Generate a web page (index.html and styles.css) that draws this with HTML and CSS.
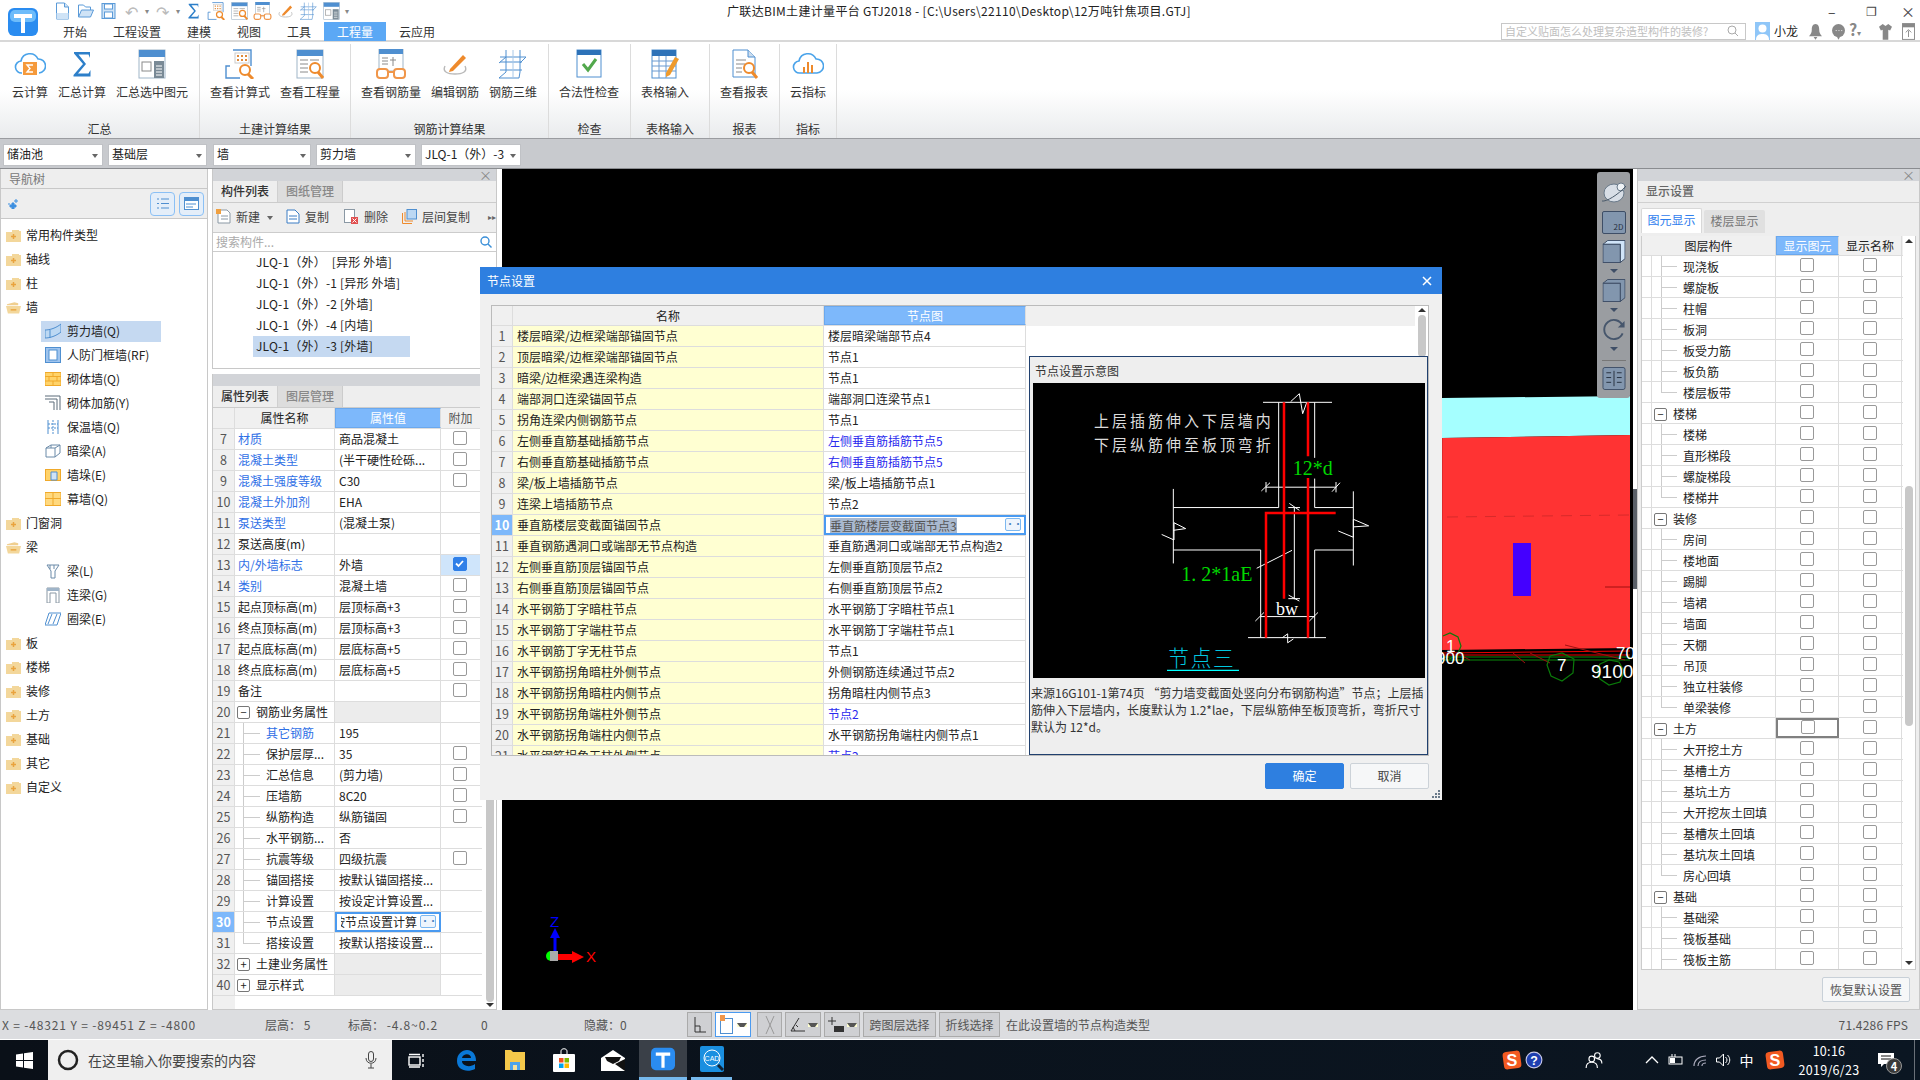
FILE: index.html
```html
<!DOCTYPE html>
<html lang="zh">
<head>
<meta charset="utf-8">
<title>广联达BIM土建计量平台 GTJ2018</title>
<link rel="stylesheet" href="styles.css">
</head>
<body>
<svg class="defs" aria-hidden="true">
  <symbol id="qnew" viewBox="0 0 16 18"><path d="M2 1h8l4 4v12H2z" fill="#fff" stroke="#5a9ad8"/><path d="M10 1v4h4" fill="#cfe3f6" stroke="#5a9ad8"/><path d="M2 11h12v6H2z" fill="#cfe3f6"/></symbol>
  <symbol id="qopen" viewBox="0 0 18 18"><path d="M2 15V3h5l2 2h5v3" fill="#fff" stroke="#5a9ad8"/><path d="M2 15l3-7h12l-3 7z" fill="#cfe3f6" stroke="#5a9ad8"/></symbol>
  <symbol id="qsave" viewBox="0 0 16 18"><rect x="1.500" y="1.500" width="13" height="15" fill="#cfe3f6" stroke="#5a9ad8"/><rect x="4" y="2" width="8" height="5" fill="#fff" stroke="#5a9ad8"/><rect x="4" y="10" width="8" height="6" fill="#fff" stroke="#5a9ad8"/></symbol>
  <symbol id="cloudS" viewBox="0 0 32 30"><path d="M8 24a6 6 0 0 1-1-12 9 9 0 0 1 17-2 7 7 0 0 1 1 14" fill="#fff" stroke="#4aa3ea" stroke-width="1.600"/><rect x="9" y="13" width="14" height="13" fill="#f59a3c"/><path d="M19 16h-6l3 3.500-3 3.500h6" fill="none" stroke="#fff" stroke-width="1.400"/></symbol>
  <symbol id="sigma" viewBox="0 0 32 30"><path d="M8 3h16v6l-1.500-3.500H12.500l7.500 9.500-8 9.500h10.500l2-3.500v6.500H7.500v-1.500l9.500-11L8 4.500z" fill="#2d7fc9"/></symbol>
  <symbol id="sumsel" viewBox="0 0 32 30"><rect x="3" y="1" width="26" height="28" fill="#fff" stroke="#9fb5c8"/><rect x="3" y="1" width="26" height="7" fill="#4f8fd0"/><rect x="6" y="13" width="9" height="9" fill="none" stroke="#8a8a8a"/><rect x="18" y="12" width="10" height="17" fill="#7a8a96"/><path d="M20 17h6M20 20h6M20 23h6M20 26h6" stroke="#fff"/></symbol>
  <symbol id="calcv" viewBox="0 0 32 30"><path d="M9 1h18v16M6 17H2v12h14" fill="none" stroke="#4f8fd0" stroke-width="1.400"/><rect x="11" y="4" width="14" height="10" fill="#fff" stroke="#ccc"/><path d="M13 6h2v2h-2zM17 6h2v2h-2zM21 6h2v2h-2zM13 10h2v2h-2zM17 10h2v2h-2zM21 10h2v2h-2z" fill="#e08a3a"/><circle cx="21" cy="21" r="5" fill="#fff" stroke="#ee8a2c" stroke-width="2"/><path d="M24 25l5 5" stroke="#ee8a2c" stroke-width="3"/></symbol>
  <symbol id="qtyv" viewBox="0 0 32 30"><rect x="3" y="1" width="26" height="28" fill="#fff" stroke="#9fb5c8"/><rect x="3" y="1" width="26" height="6" fill="#4f8fd0"/><path d="M6 11h8M16 11h9M6 15h8M6 19h8M6 23h8" stroke="#8a8a8a"/><circle cx="21" cy="19" r="5" fill="#fff" stroke="#ee8a2c" stroke-width="2"/><path d="M24 23l5 6" stroke="#ee8a2c" stroke-width="3"/></symbol>
  <symbol id="rebarv" viewBox="0 0 32 30"><rect x="4" y="0" width="24" height="22" fill="#fff" stroke="#9fb5c8"/><rect x="4" y="0" width="24" height="5" fill="#4f8fd0"/><path d="M7 9h6M7 12h6M7 15h6M18 8v9M15 11h6" stroke="#8a8a8a"/><rect x="2" y="20" width="11" height="9" rx="3" fill="#fff" stroke="#f0964a" stroke-width="2"/><rect x="19" y="20" width="11" height="9" rx="3" fill="#fff" stroke="#f0964a" stroke-width="2"/><path d="M13 23h6" stroke="#f0964a" stroke-width="2"/></symbol>
  <symbol id="editr" viewBox="0 0 32 30"><path d="M6 17c-3 6 3 8 10 8s13-2 10-8" fill="none" stroke="#b9b9b9" stroke-width="1.400"/><path d="M11 20l13-14 3 3-13 13-4 1z" fill="#ee8a2c"/></symbol>
  <symbol id="r3d" viewBox="0 0 32 30"><path d="M9 1v22M23 1v22M3 8h26M3 13h22M3 21h22M2 29h20M9 23l-7 6M29 8l-6 6M23 23l-1 6M9 8l-7 6" fill="none" stroke="#4f8fd0"/><path d="M16 1v28" stroke="#a8c8e8"/></symbol>
  <symbol id="chk" viewBox="0 0 32 30"><rect x="4" y="1" width="24" height="27" fill="#fff" stroke="#4f8fd0"/><rect x="4" y="1" width="24" height="5" fill="#2d72b8"/><path d="M10 15l5 6 8-11" fill="none" stroke="#52a84c" stroke-width="3"/></symbol>
  <symbol id="tbl" viewBox="0 0 32 30"><rect x="3" y="1" width="24" height="28" fill="#fff" stroke="#4f8fd0"/><rect x="3" y="1" width="24" height="6" fill="#2d72b8"/><path d="M3 12h24M3 17h24M3 22h24M10 7v22M17 7v22" stroke="#6a9ad0"/><path d="M17 24l9-16 4 2-9 16-4 2z" fill="#ee9a2c"/></symbol>
  <symbol id="rept" viewBox="0 0 32 30"><path d="M5 1h15l7 7v20H5z" fill="#fff" stroke="#4f8fd0"/><path d="M20 1v7h7" fill="#cde" stroke="#4f8fd0"/><path d="M8 11h10M8 15h9M8 19h6M8 23h6" stroke="#8a8a8a"/><circle cx="21" cy="19" r="5" fill="#fff" stroke="#ee8a2c" stroke-width="2"/><path d="M24 23l5 6" stroke="#ee8a2c" stroke-width="3"/></symbol>
  <symbol id="cloudC" viewBox="0 0 32 30"><path d="M8 24a6 6 0 0 1-1-12 9 9 0 0 1 17-2 7 7 0 0 1 1 14z" fill="#fff" stroke="#4aa3ea" stroke-width="1.600"/><path d="M12 24v-6M16 24v-11M20 24v-8" stroke="#ee8a2c" stroke-width="2"/></symbol>
  <symbol id="fc" viewBox="0 0 15 13"><path d="M0 3h6V1h7v1h2v11H0z" fill="#f3d79b"/><path d="M7.500 5v5M5 7.500h5" stroke="#e9a33e" stroke-width="1.500"/></symbol>
  <symbol id="fo" viewBox="0 0 16 13"><path d="M1 3l8-2 4 1v2H1z" fill="#f0cf90"/><path d="M0 5h16l-2 8H2z" fill="#f3d79b"/><path d="M5 9h6" stroke="#e9a33e" stroke-width="1.500"/></symbol>
  <symbol id="wShear" viewBox="0 0 16 16"><path d="M0 7c5 0 11-2 16-6v8C11 13 5 15 0 15z" fill="#bcd8f3" stroke="#4f8fd0"/><path d="M5 7v8" stroke="#4f8fd0"/></symbol>
  <symbol id="wDoor" viewBox="0 0 16 16"><rect x="0.500" y="0.500" width="15" height="15" fill="#9fc4ee" stroke="#4f8fd0"/><rect x="4" y="3" width="8" height="10" fill="#fff" stroke="#4f8fd0"/></symbol>
  <symbol id="wBrick" viewBox="0 0 16 13"><rect width="16" height="13" fill="#ffd36a" stroke="#f0a92a"/><path d="M0 4h16M0 8.500h16M8 0v4M4 4v4.500M12 4v4.500M8 8.500v4.500" stroke="#f0a92a"/></symbol>
  <symbol id="wRebar" viewBox="0 0 16 16"><path d="M0 1h15v14M0 4h12v11M4 7h5v8" fill="none" stroke="#5a6a78"/></symbol>
  <symbol id="wInsul" viewBox="0 0 16 16"><path d="M3 1v14M13 1v14" stroke="#4f8fd0"/><path d="M8 1v14M3 5h10M3 9h10" stroke="#4f8fd0" stroke-dasharray="2 1"/></symbol>
  <symbol id="wHide" viewBox="0 0 16 16"><path d="M1 5l5-3h9v8l-5 4H1z" fill="#fff" stroke="#6a8aa8"/><path d="M1 5h9v9M10 5l5-3M6 2v3" fill="none" stroke="#6a8aa8"/></symbol>
  <symbol id="wPier" viewBox="0 0 16 14"><rect x="0.500" y="1.500" width="15" height="11" fill="#ffd36a" stroke="#f0a92a"/><path d="M6 4h6v8H6z" fill="#cfe3f6" stroke="#4f8fd0"/></symbol>
  <symbol id="wCurt" viewBox="0 0 16 13"><rect width="16" height="13" fill="#ffd97f" stroke="#f0a92a"/><path d="M8 0v13M0 6h16" stroke="#f0a92a"/></symbol>
  <symbol id="bFun" viewBox="0 0 16 16"><path d="M2 2h12l-4 6v7H6V8z" fill="#fff" stroke="#6a8aa8"/><path d="M5 2v4M9 2v4" stroke="#6a8aa8"/></symbol>
  <symbol id="bLink" viewBox="0 0 16 16"><path d="M2 1h12v15h-3V6H5v10H2z" fill="#fff" stroke="#8a98a4"/><path d="M2 1h12v3H2z" fill="#9fb4c8"/></symbol>
  <symbol id="bRing" viewBox="0 0 16 14"><path d="M4 1h12l-4 12H0z" fill="#fff" stroke="#4f8fd0"/><path d="M7 2L3 12M12 2L8 12" stroke="#4f8fd0"/></symbol>
  <symbol id="cube" viewBox="0 0 24 24"><path d="M0.500 4.500l5-4h18v19l-5 4V4.500z" fill="#d0e4f8" stroke="#3e4e66"/><rect x="0.500" y="4.500" width="18" height="19" fill="#8296ae" stroke="#3e4e66"/></symbol>
  <symbol id="cube2" viewBox="0 0 24 24"><path d="M0.500 4.500l5-4h18v19l-5 4V4.500z" fill="#8296ae" stroke="#3e4e66"/><rect x="0.500" y="4.500" width="18" height="19" fill="#8296ae" stroke="#3e4e66"/></symbol>
  <symbol id="sog" viewBox="0 0 16 16"><rect x="1" y="1" width="14" height="14" rx="3" fill="#f25a22" transform="rotate(-8 8 8)"/><text x="8" y="13" class="sogt">S</text></symbol>
</svg>

<div class="app">
  <header class="top">
    <div class="logo">
      <svg width="30" height="28" viewBox="0 0 30 28"><rect width="30" height="28" rx="6" fill="#2a8cf0"/><rect x="2" y="2" width="26" height="12" rx="5" fill="#6dbcfa"/><path d="M6 6h18v4h-7v15h-4V10H6z" fill="#fff"/></svg>
    </div>
    <div class="topr">
      <div class="qbar">
        <svg class="q"><use href="#qnew"/></svg><svg class="q"><use href="#qopen"/></svg><svg class="q"><use href="#qsave"/></svg>
        <span class="q qg">↶</span><span class="qa">▾</span><span class="q qg">↷</span><span class="qa">▾</span>
        <svg class="q"><use href="#sigma"/></svg><svg class="q"><use href="#calcv"/></svg><svg class="q"><use href="#qtyv"/></svg><svg class="q"><use href="#rebarv"/></svg><svg class="q"><use href="#editr"/></svg><svg class="q"><use href="#r3d"/></svg><svg class="q"><use href="#sumsel"/></svg>
        <span class="qa">▾</span>
        <span class="ttl">广联达BIM土建计量平台 GTJ2018 - [C:\Users\22110\Desktop\12万吨针焦项目.GTJ]</span>
        <span class="win"><span class="w1">–</span><span class="w2">❐</span><span class="w3">×</span></span>
      </div>
      <div class="tabs">
        <span class="tab">开始</span><span class="tab">工程设置</span><span class="tab">建模</span><span class="tab">视图</span><span class="tab">工具</span><span class="tab on">工程量</span><span class="tab">云应用</span>
        <div class="usr">
          <div class="srch"><span>自定义贴面怎么处理复杂造型构件的装修?</span><svg width="12" height="12" viewBox="0 0 12 12"><circle cx="5" cy="5" r="4" fill="none" stroke="#aaa"/><path d="M8 8l3 3" stroke="#aaa"/></svg></div>
          <svg class="ava" viewBox="0 0 15 18"><rect width="15" height="18" fill="#8fc6f8"/><circle cx="7.500" cy="6.500" r="4" fill="#fff"/><path d="M1 18c0-5 3-6 6.500-6s6.500 1 6.500 6z" fill="#fff"/></svg>
          <span class="uname">小龙</span>
          <svg class="ui" viewBox="0 0 14 18"><path d="M7 1c3 0 4 3 4 6s1 5 3 7H0c2-2 3-4 3-7s1-6 4-6zM5 15h4l-2 3z" fill="#888"/></svg>
          <svg class="ui ui-c" viewBox="0 0 14 18"><circle cx="7" cy="8" r="7" fill="#888"/><path d="M4 8h1M7 8h1M10 8h1" stroke="#fff"/><path d="M5 14h4l-2 4z" fill="#888"/></svg>
          <span class="uq">?<i>▾</i></span>
          <svg class="ui" viewBox="0 0 14 18"><path d="M4 1L0 4l2 4 2-1v11h6V7l2 1 2-4-4-3-3 2z" fill="#888"/></svg>
          <svg class="ui ui-l" viewBox="0 0 14 18"><rect x="0.500" y="0.500" width="13" height="17" fill="#fff" stroke="#888"/><rect x="0.500" y="0.500" width="13" height="4" fill="#888"/><path d="M7 15V8M4 10l3-3 3 3" fill="none" stroke="#888"/></svg>
        </div>
      </div>
    </div>
  </header>

  <section class="ribbon">
    <div class="grp g1"><div class="items">
      <div class="rb"><svg><use href="#cloudS"/></svg><span>云计算</span></div>
      <div class="rb"><svg><use href="#sigma"/></svg><span>汇总计算</span></div>
      <div class="rb"><svg><use href="#sumsel"/></svg><span>汇总选中图元</span></div>
    </div><div class="glab">汇总</div></div>
    <div class="grp g2"><div class="items">
      <div class="rb"><svg><use href="#calcv"/></svg><span>查看计算式</span></div>
      <div class="rb"><svg><use href="#qtyv"/></svg><span>查看工程量</span></div>
    </div><div class="glab">土建计算结果</div></div>
    <div class="grp g3"><div class="items">
      <div class="rb"><svg><use href="#rebarv"/></svg><span>查看钢筋量</span></div>
      <div class="rb"><svg><use href="#editr"/></svg><span>编辑钢筋</span></div>
      <div class="rb"><svg><use href="#r3d"/></svg><span>钢筋三维</span></div>
    </div><div class="glab">钢筋计算结果</div></div>
    <div class="grp g4"><div class="items"><div class="rb"><svg><use href="#chk"/></svg><span>合法性检查</span></div></div><div class="glab">检查</div></div>
    <div class="grp g5"><div class="items"><div class="rb"><svg><use href="#tbl"/></svg><span>表格输入</span></div></div><div class="glab">表格输入</div></div>
    <div class="grp g6"><div class="items"><div class="rb"><svg><use href="#rept"/></svg><span>查看报表</span></div></div><div class="glab">报表</div></div>
    <div class="grp g7"><div class="items"><div class="rb"><svg><use href="#cloudC"/></svg><span>云指标</span></div></div><div class="glab">指标</div></div>
  </section>

  <div class="selbar">
    <div class="sel s1">储油池<i></i></div>
    <div class="sel s2">基础层<i></i></div>
    <div class="sel s3">墙<i></i></div>
    <div class="sel s4">剪力墙<i></i></div>
    <div class="sel s5">JLQ-1（外）-3<i></i></div>
  </div>

  <main class="main">
    <aside class="nav">
      <div class="nav-h">导航树</div>
      <div class="nav-t">
        <svg width="12" height="11" viewBox="0 0 12 11"><path d="M5 5h2v2h2v2H7v2H5V9H3V7h2zM1 6h2M9 1v4M7 3h4" stroke="#3d8fe0" fill="#3d8fe0"/></svg>
        <span class="nb nb1"><svg width="13" height="13" viewBox="0 0 13 13"><path d="M1 2h2M5 2h8M1 6.500h2M5 6.500h8M1 11h2M5 11h8" stroke="#4f8fd0"/></svg></span>
        <span class="nb"><svg width="15" height="13" viewBox="0 0 15 13"><rect x="0.500" y="0.500" width="14" height="12" fill="#fff" stroke="#4f8fd0"/><rect width="15" height="4" fill="#4f8fd0"/><path d="M2 7h10M2 10h7" stroke="#4f8fd0"/></svg></span>
      </div>
      <div class="tree">
        <div class="ti"><svg class="fi"><use href="#fc"/></svg>常用构件类型</div>
        <div class="ti"><svg class="fi"><use href="#fc"/></svg>轴线</div>
        <div class="ti"><svg class="fi"><use href="#fc"/></svg>柱</div>
        <div class="ti"><svg class="fi"><use href="#fo"/></svg>墙</div>
        <div class="tc"><span class="tcin sel-on"><svg class="ci"><use href="#wShear"/></svg>剪力墙(Q)</span></div>
        <div class="tc"><span class="tcin"><svg class="ci"><use href="#wDoor"/></svg>人防门框墙(RF)</span></div>
        <div class="tc"><span class="tcin"><svg class="ci"><use href="#wBrick"/></svg>砌体墙(Q)</span></div>
        <div class="tc"><span class="tcin"><svg class="ci"><use href="#wRebar"/></svg>砌体加筋(Y)</span></div>
        <div class="tc"><span class="tcin"><svg class="ci"><use href="#wInsul"/></svg>保温墙(Q)</span></div>
        <div class="tc"><span class="tcin"><svg class="ci"><use href="#wHide"/></svg>暗梁(A)</span></div>
        <div class="tc"><span class="tcin"><svg class="ci"><use href="#wPier"/></svg>墙垛(E)</span></div>
        <div class="tc"><span class="tcin"><svg class="ci"><use href="#wCurt"/></svg>幕墙(Q)</span></div>
        <div class="ti"><svg class="fi"><use href="#fc"/></svg>门窗洞</div>
        <div class="ti"><svg class="fi"><use href="#fo"/></svg>梁</div>
        <div class="tc"><span class="tcin"><svg class="ci"><use href="#bFun"/></svg>梁(L)</span></div>
        <div class="tc"><span class="tcin"><svg class="ci"><use href="#bLink"/></svg>连梁(G)</span></div>
        <div class="tc"><span class="tcin"><svg class="ci"><use href="#bRing"/></svg>圈梁(E)</span></div>
        <div class="ti"><svg class="fi"><use href="#fc"/></svg>板</div>
        <div class="ti"><svg class="fi"><use href="#fc"/></svg>楼梯</div>
        <div class="ti"><svg class="fi"><use href="#fc"/></svg>装修</div>
        <div class="ti"><svg class="fi"><use href="#fc"/></svg>土方</div>
        <div class="ti"><svg class="fi"><use href="#fc"/></svg>基础</div>
        <div class="ti"><svg class="fi"><use href="#fc"/></svg>其它</div>
        <div class="ti"><svg class="fi"><use href="#fc"/></svg>自定义</div>
      </div>
    </aside>

    <div class="mid">
      <section class="upper">
        <div class="strip"><span class="x">×</span></div>
        <div class="ptabs"><span class="pt on">构件列表</span><span class="pt">图纸管理</span></div>
        <div class="mtool">
          <svg class="m1" width="15" height="15" viewBox="0 0 15 15"><path d="M2 1h9l3 3v10H2z" fill="#fff" stroke="#8a98a4"/><path d="M0 0h5v5H0z" fill="#f0a040"/><path d="M5 7h7M5 10h7" stroke="#8a98a4"/></svg><span class="mt">新建</span><i class="ar"></i>
          <svg class="m2" width="14" height="15" viewBox="0 0 14 15"><path d="M1 1h8l4 4v9H1z" fill="#fff" stroke="#3a7cc4"/><path d="M3 7h8M3 10h8" stroke="#3a7cc4"/></svg><span class="mt">复制</span>
          <svg class="m3" width="15" height="15" viewBox="0 0 15 15"><rect x="0.500" y="0.500" width="10" height="13" fill="#fff" stroke="#8a98a4"/><rect x="7" y="8" width="7" height="7" fill="#e05050"/><path d="M8.500 9.500l4 4M12.500 9.500l-4 4" stroke="#fff"/></svg><span class="mt">删除</span>
          <svg class="m4" width="15" height="15" viewBox="0 0 15 15"><path d="M0.500 4v10.500h9.500M3 3v9h8" fill="none" stroke="#ee8a2c"/><rect x="5" y="0.500" width="9.500" height="9.500" fill="#bcd8f3" stroke="#4f8fd0"/></svg><span class="mt">层间复制</span>
          <span class="more">▸▸</span>
        </div>
        <div class="msearch"><span>搜索构件...</span><svg width="12" height="12" viewBox="0 0 12 12"><circle cx="5" cy="5" r="4" fill="none" stroke="#3a8fd8" stroke-width="1.400"/><path d="M8 8l3.500 3.500" stroke="#3a8fd8" stroke-width="1.400"/></svg></div>
        <div class="clist">
          <div class="cr">JLQ-1（外）  [异形 外墙]</div>
          <div class="cr">JLQ-1（外）-1 [异形 外墙]</div>
          <div class="cr">JLQ-1（外）-2 [外墙]</div>
          <div class="cr">JLQ-1（外）-4 [内墙]</div>
          <div class="cr on">JLQ-1（外）-3 [外墙]</div>
        </div>
      </section>
      <section class="low">
        <div class="strip"></div>
        <div class="ptabs"><span class="pt on">属性列表</span><span class="pt">图层管理</span></div>
        <div class="ptbl">
          <div class="pcols">
            <div class="pr ph"><span class="n"></span><span class="k">属性名称</span><span class="v hl">属性值</span><span class="a">附加</span></div>
            <div class="pr"><span class="n">7</span><span class="k lk">材质</span><span class="v">商品混凝土</span><span class="a"><i class="cb"></i></span></div>
            <div class="pr"><span class="n">8</span><span class="k lk">混凝土类型</span><span class="v">(半干硬性砼砾...</span><span class="a"><i class="cb"></i></span></div>
            <div class="pr"><span class="n">9</span><span class="k lk">混凝土强度等级</span><span class="v">C30</span><span class="a"><i class="cb"></i></span></div>
            <div class="pr"><span class="n">10</span><span class="k lk">混凝土外加剂</span><span class="v">EHA</span><span class="a"></span></div>
            <div class="pr"><span class="n">11</span><span class="k lk">泵送类型</span><span class="v">(混凝土泵)</span><span class="a"></span></div>
            <div class="pr"><span class="n">12</span><span class="k">泵送高度(m)</span><span class="v"></span><span class="a"></span></div>
            <div class="pr"><span class="n">13</span><span class="k lk">内/外墙标志</span><span class="v">外墙</span><span class="a a-on"><i class="cb ck"><svg width="11" height="11" viewBox="0 0 11 11"><path d="M2 5.500l2.500 2.500 4.500-5" fill="none" stroke="#fff" stroke-width="1.800"/></svg></i></span></div>
            <div class="pr"><span class="n">14</span><span class="k lk">类别</span><span class="v">混凝土墙</span><span class="a"><i class="cb"></i></span></div>
            <div class="pr"><span class="n">15</span><span class="k">起点顶标高(m)</span><span class="v">层顶标高+3</span><span class="a"><i class="cb"></i></span></div>
            <div class="pr"><span class="n">16</span><span class="k">终点顶标高(m)</span><span class="v">层顶标高+3</span><span class="a"><i class="cb"></i></span></div>
            <div class="pr"><span class="n">17</span><span class="k">起点底标高(m)</span><span class="v">层底标高+5</span><span class="a"><i class="cb"></i></span></div>
            <div class="pr"><span class="n">18</span><span class="k">终点底标高(m)</span><span class="v">层底标高+5</span><span class="a"><i class="cb"></i></span></div>
            <div class="pr"><span class="n">19</span><span class="k">备注</span><span class="v"></span><span class="a"><i class="cb"></i></span></div>
            <div class="pr"><span class="n">20</span><span class="k kg"><i class="box">−</i>钢筋业务属性</span><span class="v vg"></span><span class="a"></span></div>
            <div class="pr"><span class="n">21</span><span class="k kc lk">其它钢筋</span><span class="v">195</span><span class="a"></span></div>
            <div class="pr"><span class="n">22</span><span class="k kc">保护层厚...</span><span class="v">35</span><span class="a"><i class="cb"></i></span></div>
            <div class="pr"><span class="n">23</span><span class="k kc">汇总信息</span><span class="v">(剪力墙)</span><span class="a"><i class="cb"></i></span></div>
            <div class="pr"><span class="n">24</span><span class="k kc">压墙筋</span><span class="v">8C20</span><span class="a"><i class="cb"></i></span></div>
            <div class="pr"><span class="n">25</span><span class="k kc">纵筋构造</span><span class="v">纵筋锚固</span><span class="a"><i class="cb"></i></span></div>
            <div class="pr"><span class="n">26</span><span class="k kc">水平钢筋...</span><span class="v">否</span><span class="a"></span></div>
            <div class="pr"><span class="n">27</span><span class="k kc">抗震等级</span><span class="v">四级抗震</span><span class="a"><i class="cb"></i></span></div>
            <div class="pr"><span class="n">28</span><span class="k kc">锚固搭接</span><span class="v">按默认锚固搭接...</span><span class="a"></span></div>
            <div class="pr"><span class="n">29</span><span class="k kc">计算设置</span><span class="v">按设定计算设置...</span><span class="a"></span></div>
            <div class="pr"><span class="n n-on">30</span><span class="k kc">节点设置</span><span class="v v-ed"><span class="clip"><span>按节点设置计算</span></span><i class="dots">···</i></span><span class="a"></span></div>
            <div class="pr"><span class="n">31</span><span class="k kc kl">搭接设置</span><span class="v">按默认搭接设置...</span><span class="a"></span></div>
            <div class="pr"><span class="n">32</span><span class="k kg"><i class="box">+</i>土建业务属性</span><span class="v vg"></span><span class="a"></span></div>
            <div class="pr"><span class="n">40</span><span class="k kg"><i class="box">+</i>显示样式</span><span class="v vg"></span><span class="a"></span></div>
            <div class="ptail"><span class="n"></span></div>
          </div>
          <div class="psb"><div class="thumb th1"></div><i class="tri dn"></i></div>
        </div>
      </section>
    </div>

    <div class="canvas">
      <svg class="scene" viewBox="502 169 1131 841">
        <path d="M1442 398L1630 396V435L1442 438z" fill="#a5ffff"/>
        <path d="M1442 438L1630 435V648L1442 650z" fill="#f33"/>
        <path d="M1442 438V650" stroke="#c02020"/>
        <path d="M1447 517L1630 515" stroke="#d82a2a" stroke-dasharray="11 8"/>
        <rect x="1513" y="543" width="18" height="53" fill="#4400ff"/>
        <path d="M1605 587H1630" stroke="#a01010"/>
        <path d="M1442 653L1630 651M1442 655H1630" stroke="#e00" stroke-width="1"/>
        <path d="M1442 657H1630M1442 660H1630" stroke="#0a8a0a"/>
        <path d="M1530 653l20 10M1470 660l-6-3M1625 660l-60-15M1525 663l-12-10" stroke="#a01010"/>
        <path d="M1550 656l12-3 12 6-1 14-11 8-11-5-4-11z M1443 636l7-3 8 4 3 9-4 10-8 3" fill="none" stroke="#0a7a0a" stroke-width="1.200"/>
        <path d="M1600 664l9-4 10 2 5 9-4 11-11 3-9-6-3-9z" fill="none" stroke="#0a7a0a" stroke-width="1.200"/>
        <text x="1436" y="664" class="tw f17">900</text>
        <text x="1446" y="652" class="tw f17">1</text>
        <text x="1557" y="671" class="tw f17">7</text>
        <text x="1616" y="659" class="tw f17">70</text>
        <text x="1591" y="678" class="tw f18">9100</text>
        <path d="M555 958V934" stroke="#00f" stroke-width="3"/><path d="M555 928l5 10h-10z" fill="#00f"/>
        <text x="550" y="927" class="tz">Z</text>
        <path d="M558 957H572" stroke="#f00" stroke-width="6"/><path d="M584 957l-12-6v12z" fill="#f00"/>
        <text x="586" y="962" class="tx">X</text>
        <circle cx="551" cy="956" r="5" fill="#0f0"/><rect x="550" y="951" width="8" height="10" fill="#aaa"/>
      </svg>
      <div class="vbar">
        <svg class="v-sp" width="26" height="24" viewBox="0 0 26 24"><ellipse cx="13" cy="12" rx="10" ry="9" fill="#d8dee6" stroke="#6a7a8a"/><circle cx="20" cy="6" r="4" fill="#eef2f6" stroke="#6a7a8a"/><path d="M1 20c4 1 16-6 24-15" fill="none" stroke="#4a5a6a"/></svg>
        <span class="v2d">2D</span>
        <svg class="vi" viewBox="0 0 24 24"><use href="#cube"/></svg><i class="tri dn"></i>
        <svg class="vi" viewBox="0 0 24 24"><use href="#cube2"/></svg><i class="tri dn"></i>
        <svg class="vi" viewBox="0 0 24 24"><path d="M21 16a10 10 0 1 1 0-8" fill="none" stroke="#46566c" stroke-width="2"/><path d="M23 3v7h-7z" fill="#46566c"/></svg><i class="tri dn"></i>
        <i class="vsep"></i>
        <svg class="vi" viewBox="0 0 24 24"><rect x="0.500" y="0.500" width="23" height="23" rx="2" fill="#8296ae" stroke="#3e4e66"/><path d="M4 6h5M15 6h5M4 11h5M15 11h5M4 16h5M15 16h5M12 4v16" stroke="#26303e"/></svg>
      </div>
    </div>
    <div class="split"><i></i></div>

    <aside class="rpanel">
      <div class="strip"><span class="x">×</span></div>
      <div class="rh">显示设置</div>
      <div class="rtabs"><span class="rt on">图元显示</span><span class="rt">楼层显示</span></div>
      <div class="rtbl">
        <div class="rcols">
          <div class="tr th"><span class="t1">图层构件</span><span class="t2 hl">显示图元</span><span class="t2">显示名称</span></div>
          <div class="tr"><span class="t1 ch">现浇板</span><span class="t2"><i class="cb"></i></span><span class="t2"><i class="cb"></i></span></div>
          <div class="tr"><span class="t1 ch">螺旋板</span><span class="t2"><i class="cb"></i></span><span class="t2"><i class="cb"></i></span></div>
          <div class="tr"><span class="t1 ch">柱帽</span><span class="t2"><i class="cb"></i></span><span class="t2"><i class="cb"></i></span></div>
          <div class="tr"><span class="t1 ch">板洞</span><span class="t2"><i class="cb"></i></span><span class="t2"><i class="cb"></i></span></div>
          <div class="tr"><span class="t1 ch">板受力筋</span><span class="t2"><i class="cb"></i></span><span class="t2"><i class="cb"></i></span></div>
          <div class="tr"><span class="t1 ch">板负筋</span><span class="t2"><i class="cb"></i></span><span class="t2"><i class="cb"></i></span></div>
          <div class="tr"><span class="t1 ch cl">楼层板带</span><span class="t2"><i class="cb"></i></span><span class="t2"><i class="cb"></i></span></div>
          <div class="tr"><span class="t1 gr"><i class="box">−</i>楼梯</span><span class="t2"><i class="cb"></i></span><span class="t2"><i class="cb"></i></span></div>
          <div class="tr"><span class="t1 ch">楼梯</span><span class="t2"><i class="cb"></i></span><span class="t2"><i class="cb"></i></span></div>
          <div class="tr"><span class="t1 ch">直形梯段</span><span class="t2"><i class="cb"></i></span><span class="t2"><i class="cb"></i></span></div>
          <div class="tr"><span class="t1 ch">螺旋梯段</span><span class="t2"><i class="cb"></i></span><span class="t2"><i class="cb"></i></span></div>
          <div class="tr"><span class="t1 ch cl">楼梯井</span><span class="t2"><i class="cb"></i></span><span class="t2"><i class="cb"></i></span></div>
          <div class="tr"><span class="t1 gr"><i class="box">−</i>装修</span><span class="t2"><i class="cb"></i></span><span class="t2"><i class="cb"></i></span></div>
          <div class="tr"><span class="t1 ch">房间</span><span class="t2"><i class="cb"></i></span><span class="t2"><i class="cb"></i></span></div>
          <div class="tr"><span class="t1 ch">楼地面</span><span class="t2"><i class="cb"></i></span><span class="t2"><i class="cb"></i></span></div>
          <div class="tr"><span class="t1 ch">踢脚</span><span class="t2"><i class="cb"></i></span><span class="t2"><i class="cb"></i></span></div>
          <div class="tr"><span class="t1 ch">墙裙</span><span class="t2"><i class="cb"></i></span><span class="t2"><i class="cb"></i></span></div>
          <div class="tr"><span class="t1 ch">墙面</span><span class="t2"><i class="cb"></i></span><span class="t2"><i class="cb"></i></span></div>
          <div class="tr"><span class="t1 ch">天棚</span><span class="t2"><i class="cb"></i></span><span class="t2"><i class="cb"></i></span></div>
          <div class="tr"><span class="t1 ch">吊顶</span><span class="t2"><i class="cb"></i></span><span class="t2"><i class="cb"></i></span></div>
          <div class="tr"><span class="t1 ch">独立柱装修</span><span class="t2"><i class="cb"></i></span><span class="t2"><i class="cb"></i></span></div>
          <div class="tr"><span class="t1 ch cl">单梁装修</span><span class="t2"><i class="cb"></i></span><span class="t2"><i class="cb"></i></span></div>
          <div class="tr"><span class="t1 gr"><i class="box">−</i>土方</span><span class="t2 t-cur"><i class="cb"></i></span><span class="t2"><i class="cb"></i></span></div>
          <div class="tr"><span class="t1 ch">大开挖土方</span><span class="t2"><i class="cb"></i></span><span class="t2"><i class="cb"></i></span></div>
          <div class="tr"><span class="t1 ch">基槽土方</span><span class="t2"><i class="cb"></i></span><span class="t2"><i class="cb"></i></span></div>
          <div class="tr"><span class="t1 ch">基坑土方</span><span class="t2"><i class="cb"></i></span><span class="t2"><i class="cb"></i></span></div>
          <div class="tr"><span class="t1 ch">大开挖灰土回填</span><span class="t2"><i class="cb"></i></span><span class="t2"><i class="cb"></i></span></div>
          <div class="tr"><span class="t1 ch">基槽灰土回填</span><span class="t2"><i class="cb"></i></span><span class="t2"><i class="cb"></i></span></div>
          <div class="tr"><span class="t1 ch">基坑灰土回填</span><span class="t2"><i class="cb"></i></span><span class="t2"><i class="cb"></i></span></div>
          <div class="tr"><span class="t1 ch cl">房心回填</span><span class="t2"><i class="cb"></i></span><span class="t2"><i class="cb"></i></span></div>
          <div class="tr"><span class="t1 gr"><i class="box">−</i>基础</span><span class="t2"><i class="cb"></i></span><span class="t2"><i class="cb"></i></span></div>
          <div class="tr"><span class="t1 ch">基础梁</span><span class="t2"><i class="cb"></i></span><span class="t2"><i class="cb"></i></span></div>
          <div class="tr"><span class="t1 ch">筏板基础</span><span class="t2"><i class="cb"></i></span><span class="t2"><i class="cb"></i></span></div>
          <div class="tr"><span class="t1 ch">筏板主筋</span><span class="t2"><i class="cb"></i></span><span class="t2"><i class="cb"></i></span></div>
        </div>
        <div class="rsb"><i class="tri up"></i><div class="thumb th2"></div><i class="tri dn"></i></div>
      </div>
      <div class="rfoot"><span class="btn2">恢复默认设置</span></div>
    </aside>
  </main>

  <footer class="status">
    <span class="st1">X = -48321 Y = -89451 Z = -4800</span>
    <span class="st2">层高： 5</span>
    <span class="st3">标高： <span class="st3v">-4.8~0.2</span></span>
    <span class="st4">0</span>
    <span class="st5">隐藏：0</span>
    <span class="sb sb1"><svg width="14" height="18" viewBox="0 0 14 18"><path d="M2 1v15h11M2 10h5v6" fill="none" stroke="#333"/></svg></span>
    <span class="sb sb2"><svg width="14" height="20" viewBox="0 0 14 20"><rect x="0.500" y="3.500" width="12" height="15" fill="#fff" stroke="#4f8fd0"/><rect width="5" height="6" fill="#f0964a"/></svg><i class="tri dn dk"></i></span>
    <span class="sb sb3"><svg width="14" height="20" viewBox="0 0 14 20"><path d="M3 1l8 18M11 1L3 19" stroke="#999"/></svg></span>
    <span class="sb sb4"><svg width="16" height="18" viewBox="0 0 16 18"><path d="M10 2L2 15h14M6 15l-2-4M7 9l2 2" fill="none" stroke="#333"/></svg><i class="tri dn dk"></i></span>
    <span class="sb sb5"><svg width="16" height="18" viewBox="0 0 16 18"><path d="M4 1v8M0 5h8" stroke="#333"/><rect x="6" y="10" width="10" height="6" fill="#333"/></svg><i class="tri dn dk"></i></span>
    <span class="sb sb6">跨图层选择</span>
    <span class="sb sb7">折线选择</span>
    <span class="st6">在此设置墙的节点构造类型</span>
    <span class="fps">71.4286 FPS</span>
  </footer>

  <nav class="task">
    <span class="tk-win"><svg width="17" height="17" viewBox="0 0 17 17"><path d="M0 2.500l7-1v6.500H0zM8 1.300L17 0v8H8zM0 9h7v6.500l-7-1zM8 9h9v8l-9-1.300z" fill="#fff"/></svg></span>
    <div class="tk-search"><svg width="22" height="22" viewBox="0 0 22 22"><circle cx="11" cy="11" r="9" fill="none" stroke="#222" stroke-width="2.500"/></svg><span>在这里输入你要搜索的内容</span><svg class="mic" width="12" height="18" viewBox="0 0 12 18"><rect x="3.500" y="0.500" width="5" height="10" rx="2.500" fill="none" stroke="#444"/><path d="M1 7c0 7 10 7 10 0M6 13v4M3 17h6" fill="none" stroke="#444"/></svg></div>
    <span class="tk"><svg width="17" height="15" viewBox="0 0 17 15"><rect x="1" y="4" width="11" height="8" fill="none" stroke="#fff" stroke-width="1.400"/><path d="M1 1.500h11M1 14h11M15 1v3M15 6v3M15 11v3" stroke="#fff" stroke-width="1.400"/></svg></span>
    <span class="tk"><svg width="22" height="22" viewBox="0 0 22 22"><path d="M2 12C2 5 7 1 12 1c6 0 9 5 9 11H7c0 5 8 7 13 3v5c-8 4-18 1-18-8zM7 9h9c0-5-8-5-9 0z" fill="#0a78d7"/></svg></span>
    <span class="tk"><svg width="22" height="22" viewBox="0 0 22 22"><path d="M1 1h6l2 2h12v18H1z" fill="#f4c84a"/><rect x="6" y="13" width="10" height="8" fill="#4aa3ea"/><rect x="9" y="16" width="4" height="5" fill="#f4e09a"/></svg></span>
    <span class="tk"><svg width="22" height="24" viewBox="0 0 22 24"><path d="M8 6V3c0-3 6-3 6 0v3" fill="none" stroke="#fff"/><rect x="0" y="6" width="22" height="18" rx="1" fill="#fff"/><rect x="6" y="10" width="4.500" height="4.500" fill="#f25022"/><rect x="11.500" y="10" width="4.500" height="4.500" fill="#7fba00"/><rect x="6" y="15.500" width="4.500" height="4.500" fill="#00a4ef"/><rect x="11.500" y="15.500" width="4.500" height="4.500" fill="#ffb900"/></svg></span>
    <span class="tk"><svg width="24" height="21" viewBox="0 0 24 21"><path d="M0 8L12 0l12 8v13H0z" fill="#fff"/><path d="M4 7h16l-2 4-6 3-6-3z" fill="#111"/><path d="M24 9v12L14 14z" fill="#111"/></svg></span>
    <span class="tk tk-on tk-a"><svg width="24" height="24" viewBox="0 0 30 28"><rect width="30" height="28" rx="6" fill="#2a8cf0"/><path d="M6 6h18v4h-7v15h-4V10H6z" fill="#fff"/></svg></span>
    <span class="tk tk-on tk-b"><svg width="24" height="26" viewBox="0 0 24 26"><rect width="24" height="26" rx="2" fill="#1a8fe0"/><circle cx="12" cy="12" r="8" fill="none" stroke="#fff"/><text x="12" y="15" class="cadt">CAD</text><path d="M18 19l5 5" stroke="#123" stroke-width="3"/></svg></span>
    <div class="tray">
      <svg class="ty t-s" viewBox="0 0 16 16"><use href="#sog"/></svg>
      <svg class="ty t-q" viewBox="0 0 16 16"><circle cx="8" cy="8" r="7" fill="#1e3fb0" stroke="#c8c8e8"/><text x="8" y="12" class="qmt">?</text></svg>
      <svg class="ty t-p" viewBox="0 0 16 16"><circle cx="6" cy="7" r="2.500" fill="none" stroke="#fff"/><circle cx="11" cy="4" r="2.500" fill="none" stroke="#fff"/><path d="M1 15c0-4 2-5 5-5s5 1 5 5M11 7c2 0 4 1 4 4" fill="none" stroke="#fff"/></svg>
      <svg class="ty t-c" viewBox="0 0 16 16"><path d="M2 11l6-6 6 6" fill="none" stroke="#fff" stroke-width="1.300"/></svg>
      <svg class="ty" viewBox="0 0 16 16"><rect x="1" y="5" width="13" height="7" fill="none" stroke="#fff"/><rect x="2" y="6" width="5" height="5" fill="#fff"/><path d="M4 2v3M7 2v3" stroke="#fff"/></svg>
      <svg class="ty" viewBox="0 0 16 16"><path d="M2 14c0-6 5-10 12-10M6 14c0-4 3-6 8-6M10 14c0-2 2-3 4-3" fill="none" stroke="#aab" stroke-width="1.200"/></svg>
      <svg class="ty t-v" viewBox="0 0 16 16"><path d="M1 6h3l4-4v12l-4-4H1zM10 5c2 2 2 4 0 6M12 3c3 3 3 7 0 10" fill="none" stroke="#fff"/></svg>
      <span class="ty ty-t">中</span>
      <svg class="ty t-s2" viewBox="0 0 16 16"><use href="#sog"/></svg>
      <div class="clock"><span>10:16</span><span>2019/6/23</span></div>
      <span class="note"><svg width="18" height="16" viewBox="0 0 18 16"><path d="M1 1h16v11H7l-3 3v-3H1z" fill="#fff"/><path d="M4 4h10M4 7h10" stroke="#111"/></svg><i class="badge">4</i></span>
      <i class="showd"></i>
    </div>
  </nav>

  <div class="dialog">
    <div class="d-title"><span>节点设置</span><svg width="10" height="10" viewBox="0 0 10 10"><path d="M1 1l8 8M9 1l-8 8" stroke="#fff" stroke-width="1.500"/></svg></div>
    <div class="d-frame">
      <div class="d-tbl">
        <div class="dr dh"><span class="n"></span><span class="dk">名称</span><span class="dv hl">节点图</span></div>
        <div class="dr"><span class="n">1</span><span class="dk">楼层暗梁/边框梁端部锚固节点</span><span class="dv">楼层暗梁端部节点4</span></div>
        <div class="dr"><span class="n">2</span><span class="dk">顶层暗梁/边框梁端部锚固节点</span><span class="dv">节点1</span></div>
        <div class="dr"><span class="n">3</span><span class="dk">暗梁/边框梁遇连梁构造</span><span class="dv">节点1</span></div>
        <div class="dr"><span class="n">4</span><span class="dk">端部洞口连梁锚固节点</span><span class="dv">端部洞口连梁节点1</span></div>
        <div class="dr"><span class="n">5</span><span class="dk">拐角连梁内侧钢筋节点</span><span class="dv">节点1</span></div>
        <div class="dr"><span class="n">6</span><span class="dk">左侧垂直筋基础插筋节点</span><span class="dv bl">左侧垂直筋插筋节点5</span></div>
        <div class="dr"><span class="n">7</span><span class="dk">右侧垂直筋基础插筋节点</span><span class="dv bl">右侧垂直筋插筋节点5</span></div>
        <div class="dr"><span class="n">8</span><span class="dk">梁/板上墙插筋节点</span><span class="dv">梁/板上墙插筋节点1</span></div>
        <div class="dr"><span class="n">9</span><span class="dk">连梁上墙插筋节点</span><span class="dv">节点2</span></div>
        <div class="dr"><span class="n n-on">10</span><span class="dk">垂直筋楼层变截面锚固节点</span><span class="dv dv-ed"><span class="seltx">垂直筋楼层变截面节点3</span><i class="dots">···</i></span></div>
        <div class="dr"><span class="n">11</span><span class="dk">垂直钢筋遇洞口或端部无节点构造</span><span class="dv">垂直筋遇洞口或端部无节点构造2</span></div>
        <div class="dr"><span class="n">12</span><span class="dk">左侧垂直筋顶层锚固节点</span><span class="dv">左侧垂直筋顶层节点2</span></div>
        <div class="dr"><span class="n">13</span><span class="dk">右侧垂直筋顶层锚固节点</span><span class="dv">右侧垂直筋顶层节点2</span></div>
        <div class="dr"><span class="n">14</span><span class="dk">水平钢筋丁字暗柱节点</span><span class="dv">水平钢筋丁字暗柱节点1</span></div>
        <div class="dr"><span class="n">15</span><span class="dk">水平钢筋丁字端柱节点</span><span class="dv">水平钢筋丁字端柱节点1</span></div>
        <div class="dr"><span class="n">16</span><span class="dk">水平钢筋丁字无柱节点</span><span class="dv">节点1</span></div>
        <div class="dr"><span class="n">17</span><span class="dk">水平钢筋拐角暗柱外侧节点</span><span class="dv">外侧钢筋连续通过节点2</span></div>
        <div class="dr"><span class="n">18</span><span class="dk">水平钢筋拐角暗柱内侧节点</span><span class="dv">拐角暗柱内侧节点3</span></div>
        <div class="dr"><span class="n">19</span><span class="dk">水平钢筋拐角端柱外侧节点</span><span class="dv bl">节点2</span></div>
        <div class="dr"><span class="n">20</span><span class="dk">水平钢筋拐角端柱内侧节点</span><span class="dv">水平钢筋拐角端柱内侧节点1</span></div>
        <div class="dr"><span class="n">21</span><span class="dk">水平钢筋拐角无柱外侧节点</span><span class="dv bl">节点2</span></div>
      </div>
      <div class="d-side">
        <div class="d-top"><div class="d-hd"></div><div class="d-sb"><i class="tri up"></i><div class="thumb th3"></div></div></div>
        <div class="d-fig">
          <div class="d-figt">节点设置示意图</div>
          <svg class="fig" viewBox="39 343 1176 855" preserveAspectRatio="none">
            <rect x="39" y="343" width="1176" height="855" fill="#000"/>
            <g class="wl">
              <path d="M729 399H936M776 399V704H460M884 399V560M884 620V704H1000M460 650V866M460 827H722V1081M1000 657V872M1000 827H884V1081M684 1081H918"/>
              <path d="M812 397L838 374L848 432L860 400M425 782L462 798V748L497 765L460 770M955 772L1000 790V738L1046 757L1000 760M787 1081L803 1070V1096L820 1085"/>
              <path d="M738 645H948M724 656L750 632M936 658L960 632M738 630V660M948 630V660M722 1020H884M706 1033L732 1008M868 1033L894 1008"/>
              <path d="M823 704V970M808 692L838 712M806 958L838 975M805 704H840M805 968H840M710 880L816 828"/>
            </g>
            <g class="rl"><path d="M792 399V968M864 399V555M864 618V1081M738 1081V720H947"/></g>
            <text x="222" y="470" class="fg-c">上层插筋伸入下层墙内</text>
            <text x="222" y="540" class="fg-c">下层纵筋伸至板顶弯折</text>
            <text x="818" y="610" class="fg-g">12*d</text>
            <text x="484" y="916" class="fg-g">1. 2*1aE</text>
            <text x="768" y="1014" class="fg-w">bw</text>
            <text x="445" y="1163" class="fg-t">节点三</text>
            <path d="M441 1176H657" stroke="#0ff" stroke-width="4"/>
          </svg>
          <p class="d-desc">来源16G101-1第74页 “剪力墙变截面处竖向分布钢筋构造”节点；上层插<br>筋伸入下层墙内，长度默认为 1.2*lae，下层纵筋伸至板顶弯折，弯折尺寸<br>默认为 12*d。</p>
        </div>
      </div>
    </div>
    <div class="d-foot"><span class="ok">确定</span><span class="cancel">取消</span></div>
    <svg class="grip" width="10" height="10" viewBox="0 0 10 10"><path d="M7 1h2v2H7zM4 4h2v2H4zM7 4h2v2H7zM1 7h2v2H1zM4 7h2v2H4zM7 7h2v2H7z" fill="#6a7a8a"/></svg>
  </div>
</div>
</body>
</html>
```

FILE: styles.css
```css
*{box-sizing:border-box}
html,body{margin:0;padding:0;background:#fff}
.defs{position:absolute;width:0;height:0;overflow:hidden}
.app{position:relative;width:1920px;height:1080px;overflow:hidden;display:flex;flex-direction:column;font:12px/16px "Noto Sans CJK SC","Liberation Sans",sans-serif;color:#222;background:#fff}
i{font-style:normal}

.top{height:42px;display:flex;border-bottom:2px solid #d8d8d8;flex:none}
.logo{width:45px;padding:8px 0 0 8px;flex:none}
.topr{flex:1;display:flex;flex-direction:column;min-width:0}
.qbar{height:22px;display:flex;align-items:center;padding-left:6px}
.q{width:23px;height:18px;flex:none;text-align:center}
.qg{color:#bbb;font-size:16px;line-height:18px}
.qa{width:8px;font-size:8px;color:#888;text-align:center;flex:none}
.ttl{margin-left:376px;white-space:nowrap;font-size:12px;color:#222;letter-spacing:.33px}
.win{margin-left:auto;display:flex;color:#444;font-size:14px}
.w1{width:38px}.w2{width:35px;font-size:12px}.w3{width:19px}
.tabs{height:18px;display:flex;padding-left:5px;align-items:stretch}
.tab{padding:2px 13px 0;white-space:nowrap;color:#333}
.tab.on{background:#5ba8f5;color:#fff;height:19px}
.usr{margin-left:auto;display:flex;align-items:center}
.srch{width:245px;height:17px;border:1px solid #c8c8c8;display:flex;align-items:center;justify-content:space-between;padding:0 6px 0 3px;font-size:11px;color:#c0c0c0;margin-right:9px}
.ava{width:15px;height:18px;margin-right:4px}
.uname{width:35px;color:#222}
.ui{width:13px;height:17px;margin-right:10px;flex:none}
.ui-c{margin-right:4px}
.ui-l{margin-right:5px}
.uq{color:#888;font-size:16px;width:30px;font-weight:700;line-height:16px}
.uq i{font-size:8px;font-weight:400}

.ribbon{height:97px;flex:none;display:flex;background:linear-gradient(#fff 0,#fff 50%,#e9ebed 100%);border-bottom:1px solid #9a9ca0}
.grp{display:flex;flex-direction:column;position:relative;border-right:1px solid #dcdcdc;margin:2px 0 0;flex:none}
.g1{width:200px}.g2{width:151px}.g3{width:198px}.g4{width:82px}.g5{width:79px}.g6{width:70px}.g7{width:57px}
.items{display:flex;gap:10px;padding:5px 0 0 10px}
.g1 .items{padding-left:12px}
.rb{display:flex;flex-direction:column;align-items:center;white-space:nowrap;color:#333}
.rb svg{width:32px;height:30px;margin-bottom:5px}
.glab{margin-top:auto;text-align:center;height:18px;padding-top:1px;color:#333}

.selbar{height:30px;flex:none;background:#c8cace;border-bottom:1px solid #8a8c90;display:flex;padding:5px 0 0 3px;gap:5px}
.sel{height:22px;background:#fff;border:1px solid #c0c2c6;padding:1px 0 0 3px;position:relative;white-space:nowrap}
.sel i{position:absolute;right:4px;top:9px;border:3px solid transparent;border-top:4px solid #666;border-bottom:0}
.s1{width:100px}.s2{width:99px;margin-right:1px}.s3{width:98px}.s4{width:100px}.s5{width:100px}

.main{flex:none;height:841px;display:flex}
.nav{width:208px;flex:none;border:1px solid #c8c8c8;border-width:0 1px 1px 1px;display:flex;flex-direction:column;margin-right:4px}
.nav-h{height:20px;background:#eee;border-bottom:1px solid #c8c8c8;padding:2px 0 0 8px;color:#777}
.nav-t{height:30px;background:#eee;border-bottom:1px solid #c8c8c8;display:flex;align-items:center;padding:0 3px 0 6px;gap:4px}
.nav-t>svg{margin-right:auto}
.nb{width:25px;height:24px;border:1px solid #8bc0f5;border-radius:4px;background:#e4eef9;display:flex;align-items:center;justify-content:center}
.tree{padding-top:4px;flex:1;background:#fff}
.ti,.tc{height:24px;display:flex;align-items:center;white-space:nowrap}
.ti{padding-left:5px}
.fi{width:15px;height:13px;margin-right:5px}
.tc{padding-left:40px}
.tcin{display:flex;align-items:center;height:21px;width:120px;padding-left:4px}
.sel-on{background:#c5d9f1}
.ci{width:16px;height:16px;margin-right:6px;flex:none}

.mid{width:285px;flex:none;display:flex;flex-direction:column;margin-right:5px}
.upper{height:200px;border:1px solid #c8c8c8;border-top:0;display:flex;flex-direction:column;flex:none}
.strip{height:12px;background:#d2d4d8;flex:none;display:flex;justify-content:flex-end;color:#888;font-size:13px;line-height:12px;padding-right:4px}
.ptabs{height:22px;background:#eee;border-bottom:1px solid #ccc;display:flex;flex:none}
.pt{width:65px;background:#ddd;color:#888;text-align:center;padding-top:2px;font-weight:500;border-right:1px solid #ccc}
.pt.on{background:#eee;color:#333;border-right:1px solid #d0d0d0}
.mtool{height:30px;background:#eee;border-bottom:1px solid #ccc;display:flex;align-items:center;padding:0 0 2px 3px;flex:none}
.mt{margin-left:5px;white-space:nowrap;color:#444}
.ar{border:3px solid transparent;border-top:4px solid #666;border-bottom:0;margin:3px 0 0 7px}
.m2{margin-left:13px}.m3{margin-left:15px}.m4{margin-left:14px}
.more{margin-left:auto;font-size:8px;color:#666}
.msearch{height:19px;border-bottom:1px solid #ccc;display:flex;align-items:center;justify-content:space-between;padding:0 4px 0 3px;color:#aaa;flex:none}
.clist{padding:0 0 0 40px;flex:1}
.cr{height:21px;line-height:20px;padding-left:3px;width:157px;white-space:pre;letter-spacing:.2px}
.cr.on{background:#c5d9f1}

.low{flex:1;margin-top:5px;border:1px solid #c8c8c8;border-top:0;display:flex;flex-direction:column;min-height:0}
.ptbl{flex:1;display:flex;min-height:0}
.pcols{width:269px;flex:none;display:flex;flex-direction:column}
.pr{display:grid;grid-template-columns:22px 100px 106px 41px;height:21px;border-bottom:1px solid #ddd;flex:none}
.pr>span{display:flex;align-items:center;white-space:nowrap;border-right:1px solid #ddd;min-width:0;overflow:hidden}
.n{background:#f0f0f0;justify-content:center;font-size:12.500px;color:#555}
.pr .k{padding-left:3px}
.pr .v{padding-left:4px}
.pr .a{justify-content:center;border-right:0;padding-right:3px}
.ph{height:21px;background:#f0f0f0}
.ph .k{justify-content:center;padding:0 !important}
.ph .a{padding:0 2px 0 0;color:#555}
.hl{background:#7db8fb !important;color:#fff;justify-content:center !important;padding:0 !important;border:1px solid #6aa8ee}
.lk{color:#2f70e6}
.kc{padding-left:31px !important;background:linear-gradient(#ccc,#ccc) 8px 0/1px 100% no-repeat,linear-gradient(#ccc,#ccc) 8px 10px/17px 1px no-repeat}
.kl{background:linear-gradient(#ccc,#ccc) 8px 0/1px 11px no-repeat,linear-gradient(#ccc,#ccc) 8px 10px/17px 1px no-repeat}
.kg{padding-left:2px !important}
.box{width:13px;height:13px;border:1px solid #777;border-radius:2px;display:flex;align-items:center;justify-content:center;font-size:11px;line-height:10px;margin-right:6px;flex:none;background:#fff}
.vg{background:#ececec}
.cb{display:inline-block;width:14px;height:14px;border:1px solid #999;border-radius:2px;background:#fff;margin-bottom:2px;flex:none}
.ck{background:#2f7fe8;border-color:#2f7fe8;line-height:10px}
.a-on{background:#cfe5fb}
.n-on{background:#7db8fb !important;color:#fff;font-weight:700}
.v-ed{border:2px solid #4a9af0 !important;padding-left:4px !important;justify-content:space-between;background:#fff}
.clip{width:76px;overflow:hidden;display:flex;justify-content:flex-end;white-space:nowrap;flex:none}
.dots{width:16px;height:13px;border:1px solid #7db8f0;border-radius:2px;color:#4a80c0;font-size:8px;line-height:9px;text-align:center;margin:0 3px 2px 0;flex:none;background:#eef5fd;font-weight:700;overflow:hidden}
.ptail{flex:1;display:flex}
.ptail .n{width:22px}
.psb{flex:1;display:flex;flex-direction:column;justify-content:flex-end;align-items:center;padding:0 0 2px 2px}
.thumb{width:8px;background:#c8c8c8;border-radius:4px;flex:none}
.th1{height:500px;margin-bottom:1px}
.tri{display:block;width:0;height:0;border:4px solid transparent;flex:none}
.tri.dn{border-top:4px solid #333;border-bottom:0}
.tri.up{border-bottom:4px solid #333;border-top:0}

.canvas{width:1131px;flex:none;background:#000;position:relative}
.scene{position:absolute;left:0;top:0;width:1131px;height:841px}
.tw{fill:#fff;font-family:"Liberation Sans",sans-serif}
.f17{font-size:17px}.f18{font-size:19px}
.tz{fill:#00f;font-size:15px;font-family:"Liberation Sans",sans-serif}
.tx{fill:#f00;font-size:15px;font-family:"Liberation Sans",sans-serif}
.vbar{position:absolute;left:1095px;top:3px;width:33px;height:226px;background:#9a9da1;border-radius:3px;display:flex;flex-direction:column;align-items:center;padding-top:9px}
.v-sp{margin-bottom:6px}
.v2d{width:24px;height:23px;background:#8296ae;border:1px solid #3e4e66;border-radius:2px;color:#26303e;font-size:8px;line-height:10px;display:flex;align-items:flex-end;justify-content:flex-end;padding:0 1px 1px 0;margin-bottom:6px}
.vi{width:24px;height:23px;flex:none}
.vbar .tri{margin:6px 0 6px;border-top-color:#3e4e66}
.vsep{width:24px;height:1px;background:#777;margin:3px 0 6px;display:block}
.split{width:4px;flex:none;background:#fff;display:flex;align-items:center}
.split i{display:block;width:4px;height:100px;background:#5a6068;margin-top:-102px}

.rpanel{width:283px;flex:none;border:1px solid #c8c8c8;border-width:0 1px 1px 1px;display:flex;flex-direction:column;background:#eee}
.rh{height:22px;border-bottom:1px solid #d0d0d0;padding:2px 0 0 8px;color:#666;font-weight:500}
.rtabs{height:33px;display:flex;padding:5px 0 3px 3px;gap:2px;align-items:flex-end;flex:none;background:#eee}
.rt{width:61px;height:23px;background:#e0e0e0;text-align:center;padding-top:3px;color:#777;border-radius:2px 2px 0 0}
.rt.on{background:#fff;color:#2f80ee;height:25px;padding-top:3px;border:1px solid #d8d8d8;border-bottom:0}
.rtbl{height:734px;margin:0 3px;border:1px solid #ccc;border-top:0;display:flex;background:#fff;flex:none;overflow:hidden}
.rcols{width:261px;flex:none}
.tr{display:grid;grid-template-columns:134px 63px 63px;height:21px;border-bottom:1px solid #ddd}
.tr>span{display:flex;align-items:center;white-space:nowrap;border-right:1px solid #ddd}
.t2{justify-content:center}
.th{height:20px;background:#f0f0f0;border-bottom:1px solid #ddd}
.th>span{justify-content:center}
.tr .ch,.tr .gr{padding-top:2px}
.t1.ch{padding-left:41px;background:linear-gradient(#ddd,#ddd) 9px 0/1px 100% no-repeat,linear-gradient(#ccc,#ccc) 19px 0/1px 100% no-repeat,linear-gradient(#ccc,#ccc) 19px 10px/16px 1px no-repeat}
.t1.cl{background:linear-gradient(#ddd,#ddd) 9px 0/1px 100% no-repeat,linear-gradient(#ccc,#ccc) 19px 0/1px 11px no-repeat,linear-gradient(#ccc,#ccc) 19px 10px/16px 1px no-repeat}
.t1.gr{padding-left:12px;background:linear-gradient(#ddd,#ddd) 9px 0/1px 100% no-repeat}
.t-cur{border:2px solid #808080 !important}
.rsb{flex:1;display:flex;flex-direction:column;align-items:center;padding:3px 0 4px}
.th2{height:240px;margin:243px 0 auto}
.rfoot{flex:1;display:flex;justify-content:flex-end;align-items:flex-start;padding:7px 9px 0 0}
.btn2{width:88px;height:25px;border:1px solid #c8d0d8;border-radius:2px;background:#f6f7f8;text-align:center;line-height:23px;color:#555}

.status{height:30px;flex:none;background:#dcdde0;border-bottom:1px solid #fff;display:flex;align-items:center;padding-left:2px;color:#555;white-space:nowrap}
.st1{width:263px;letter-spacing:.85px}.st2{width:83px}.st3{width:133px}.st3v{letter-spacing:.9px}.st4{width:103px}.st5{width:103px}
.sb{height:25px;border:1px solid #aaa;background:#cfd0d3;display:flex;align-items:center;justify-content:center;gap:3px;margin-right:3px;flex:none}
.sb1{width:25px}.sb2{width:36px;background:#fff;border-color:#4a9af0}.sb3{width:25px}.sb4{width:36px}.sb5{width:36px}.sb6{width:73px}.sb7{width:61px;margin-right:6px}
.sb2{margin-right:6px}
.tri.dk{border-width:3px;border-top:4px solid #555;border-bottom:0}
.fps{margin-left:auto;padding-right:12px;letter-spacing:.2px}

.task{height:40px;flex:none;background:linear-gradient(90deg,#0a1018,#0b1622);display:flex;color:#fff}
.tk-win{width:48px;display:flex;align-items:center;justify-content:center}
.tk-search{width:344px;background:#efefef;color:#444;font-size:14px;display:flex;align-items:center;padding-left:9px}
.tk-search span{margin-left:9px}
.mic{margin-left:auto;margin-right:15px}
.tk{width:49px;display:flex;align-items:center;justify-content:center;flex:none}
.tk-on{border-bottom:3px solid #76b9ed}
.tk-a{width:48px;background:#3a4048;margin-left:2px}
.tk-b{width:41px;margin-left:4px}
.cadt{fill:#fff;font-size:7px;text-anchor:middle;font-family:"Liberation Sans",sans-serif}
.sogt{fill:#fff;font-size:13px;font-weight:700;text-anchor:middle;font-family:"Liberation Sans",sans-serif}
.qmt{fill:#fff;font-size:11px;font-weight:700;text-anchor:middle;font-family:"Liberation Sans",sans-serif}
.tray{margin-left:auto;width:420px;display:flex;align-items:center;flex:none}
.ty{width:24px;height:16px;flex:none}
.t-s{height:20px;width:24px}.t-q{width:20px;height:18px;margin-right:38px}.t-p{height:18px;margin-right:34px}
.t-s2{height:20px;margin-left:5px;margin-right:4px}.t-v{width:23px}
.ty-t{width:23px;height:auto;font-size:14px;text-align:center}
.clock{width:76px;display:flex;flex-direction:column;align-items:center;line-height:19px;font-size:12.500px;letter-spacing:.3px}
.note{width:24px;margin-left:7px;position:relative;display:flex;justify-content:center}
.badge{position:absolute;left:12px;top:6px;width:16px;height:16px;border-radius:50%;background:#3a3a3a;border:1px solid #999;font-size:11px;line-height:14px;text-align:center;font-weight:700}
.showd{width:1px;height:40px;background:#6a7078;margin-left:16px;display:block}

.dialog{position:absolute;left:480px;top:267px;width:962px;height:533px;background:#f0f0f0;display:flex;flex-direction:column}
.d-title{height:27px;background:#2e7fe0;color:#fff;display:flex;align-items:center;justify-content:space-between;padding:0 10px 0 7px;flex:none}
.d-frame{margin:11px 13px 0 11px;height:451px;border:1px solid #bbb;display:flex;background:#fff;flex:none}
.d-tbl{width:534px;flex:none;overflow:hidden}
.dr{display:grid;grid-template-columns:21px 311px 202px;height:21px;border-bottom:1px solid #ddd}
.dr>span{display:flex;align-items:center;white-space:nowrap;border-right:1px solid #ddd}
.dh{height:20px;background:#f0f0f0}
.dk{background:#ffffd2;padding-left:4px}
.dv{padding-left:4px;background:#fff}
.dh .dk{background:#f0f0f0;justify-content:center;padding:0}
.bl{color:#2a2aee}
.dv-ed{border:2px solid #4a9af0 !important;justify-content:space-between;padding-left:4px}
.seltx{background:#a9b9cf;color:#555;line-height:15px}
.d-side{flex:1;display:flex;flex-direction:column;min-width:0}
.d-top{height:50px;display:flex;flex:none;margin-left:0}
.d-hd{width:389px;height:20px;background:#f0f0f0;flex:none}
.d-sb{flex:1;display:flex;flex-direction:column;align-items:center;padding-top:2px}
.th3{height:42px;margin-top:3px}
.d-fig{flex:1;margin-left:3px;border:1px solid #20406e;background:#eee;display:flex;flex-direction:column;min-height:0;padding:0 3px}
.d-figt{height:26px;padding:6px 0 0 2px;color:#333}
.fig{width:392px;height:295px;display:block;flex:none}
.wl path{fill:none;stroke:#fff;stroke-width:1;vector-effect:non-scaling-stroke}
.rl path{fill:none;stroke:#f00;stroke-width:2.500;vector-effect:non-scaling-stroke}
.fg-c{fill:#dcdcdc;font-size:45px;letter-spacing:9px;font-family:"Noto Sans CJK SC",sans-serif}
.fg-g{fill:#00d800;font-size:60px;font-family:"Liberation Serif",serif}
.fg-w{fill:#fff;font-size:54px;font-family:"Liberation Serif",serif}
.fg-t{fill:#00c8e0;font-size:62px;letter-spacing:5px;font-weight:300;font-family:"Noto Sans CJK SC",sans-serif}
.d-desc{margin:6px -3px 0 -2px;line-height:17px;font-size:12px;color:#333;white-space:nowrap}
.d-foot{flex:1;display:flex;justify-content:flex-end;padding:7px 13px 0 0;gap:6px}
.ok,.cancel{width:79px;height:26px;border-radius:2px;text-align:center;line-height:24px}
.ok{background:#2e7fe0;color:#fff;border:1px solid #2e7fe0}
.cancel{background:#f6f7f8;border:1px solid #ccd2d8;color:#444}
.grip{position:absolute;right:1px;bottom:1px}
```
